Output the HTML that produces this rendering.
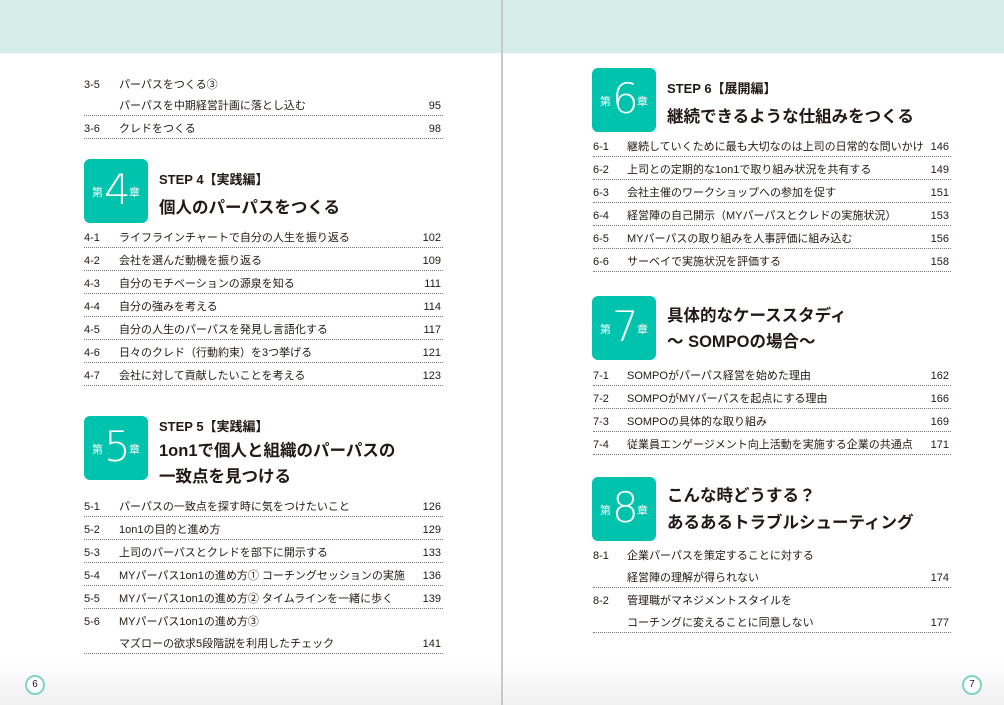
<!DOCTYPE html>
<html><head><meta charset="utf-8"><style>
*{margin:0;padding:0;box-sizing:border-box}
body{width:1004px;height:705px;position:relative;background:#fff;overflow:hidden;font-family:"Liberation Sans","Noto Sans CJK JP",sans-serif;color:#231815}
.hd{position:absolute;top:0;left:0;width:1004px;height:53px;background:#d5eee7}
.div{position:absolute;left:501px;top:0;width:2px;height:705px;background:#c8c8c8}
.r{position:absolute;height:19px;font-size:11px;line-height:18px;white-space:nowrap}
.r.l{border-bottom:1px dotted #777}
.r .n{position:absolute;left:0}
.r .t{position:absolute}
.r .p{position:absolute;right:2px}
.box{position:absolute;width:64px;height:64px;background:#00c3ae;border-radius:6px;color:#fff}
.box .a{position:absolute;left:8px;top:25px;font-size:11px}
.box .b{position:absolute;left:20px;top:6px;font-size:42px;line-height:50px;font-family:"DejaVu Sans","Liberation Sans",sans-serif;font-weight:300}
.box .c{position:absolute;left:45px;top:25px;font-size:11px}
.h1{position:absolute;font-size:13px;font-weight:bold;white-space:nowrap}
.h2{position:absolute;font-size:16.5px;font-weight:bold;white-space:nowrap}
.pg{position:absolute;top:675px;width:20px;height:20px;border:2px solid #7fd3c5;border-radius:50%;font-size:10px;text-align:center;line-height:16px;background:#fff}
.ft{position:absolute;top:660px;left:0;width:1004px;height:45px;background:linear-gradient(#fff,#f0f0f0)}
</style></head><body>
<div class="ft"></div>
<div class="hd"></div>
<div class="div"></div>

<!-- LEFT -->
<div id="L"></div>
<div class="box" style="left:84px;top:159px"><span class="a">第</span><span class="b">4</span><span class="c">章</span></div>
<div class="h1" style="left:159px;top:169px">STEP 4【実践編】</div>
<div class="h2" style="left:159px;top:194px">個人のパーパスをつくる</div>
<div class="box" style="left:84px;top:416px"><span class="a">第</span><span class="b">5</span><span class="c">章</span></div>
<div class="h1" style="left:159px;top:416px">STEP 5【実践編】</div>
<div class="h2" style="left:159px;top:437px">1on1で個人と組織のパーパスの</div>
<div class="h2" style="left:159px;top:463px">一致点を見つける</div>

<div class="box" style="left:592px;top:68px"><span class="a">第</span><span class="b">6</span><span class="c">章</span></div>
<div class="h1" style="left:667px;top:78px">STEP 6【展開編】</div>
<div class="h2" style="left:667px;top:103px">継続できるような仕組みをつくる</div>
<div class="box" style="left:592px;top:296px"><span class="a">第</span><span class="b">7</span><span class="c">章</span></div>
<div class="h2" style="left:667px;top:302px">具体的なケーススタディ</div>
<div class="h2" style="left:667px;top:328px">～ SOMPOの場合～</div>
<div class="box" style="left:592px;top:477px"><span class="a">第</span><span class="b">8</span><span class="c">章</span></div>
<div class="h2" style="left:667px;top:482px">こんな時どうする？</div>
<div class="h2" style="left:667px;top:509px">あるあるトラブルシューティング</div>

<div class="pg" style="left:25px">6</div>
<div class="pg" style="left:962px">7</div>

<!-- rows left: x 84-443, title offset 35 -->
<div class="r" style="left:84px;top:76px;width:359px"><span class="n">3-5</span><span class="t" style="left:35px">パーパスをつくる③</span></div>
<div class="r l" style="left:84px;top:97px;width:359px"><span class="t" style="left:35px">パーパスを中期経営計画に落とし込む</span><span class="p">95</span></div>
<div class="r l" style="left:84px;top:120px;width:359px"><span class="n">3-6</span><span class="t" style="left:35px">クレドをつくる</span><span class="p">98</span></div>
<div class="r l" style="left:84px;top:229px;width:359px"><span class="n">4-1</span><span class="t" style="left:35px">ライフラインチャートで自分の人生を振り返る</span><span class="p">102</span></div>
<div class="r l" style="left:84px;top:252px;width:359px"><span class="n">4-2</span><span class="t" style="left:35px">会社を選んだ動機を振り返る</span><span class="p">109</span></div>
<div class="r l" style="left:84px;top:275px;width:359px"><span class="n">4-3</span><span class="t" style="left:35px">自分のモチベーションの源泉を知る</span><span class="p">111</span></div>
<div class="r l" style="left:84px;top:298px;width:359px"><span class="n">4-4</span><span class="t" style="left:35px">自分の強みを考える</span><span class="p">114</span></div>
<div class="r l" style="left:84px;top:321px;width:359px"><span class="n">4-5</span><span class="t" style="left:35px">自分の人生のパーパスを発見し言語化する</span><span class="p">117</span></div>
<div class="r l" style="left:84px;top:344px;width:359px"><span class="n">4-6</span><span class="t" style="left:35px">日々のクレド（行動約束）を3つ挙げる</span><span class="p">121</span></div>
<div class="r l" style="left:84px;top:367px;width:359px"><span class="n">4-7</span><span class="t" style="left:35px">会社に対して貢献したいことを考える</span><span class="p">123</span></div>
<div class="r l" style="left:84px;top:498px;width:359px"><span class="n">5-1</span><span class="t" style="left:35px">パーパスの一致点を探す時に気をつけたいこと</span><span class="p">126</span></div>
<div class="r l" style="left:84px;top:521px;width:359px"><span class="n">5-2</span><span class="t" style="left:35px">1on1の目的と進め方</span><span class="p">129</span></div>
<div class="r l" style="left:84px;top:544px;width:359px"><span class="n">5-3</span><span class="t" style="left:35px">上司のパーパスとクレドを部下に開示する</span><span class="p">133</span></div>
<div class="r l" style="left:84px;top:567px;width:359px"><span class="n">5-4</span><span class="t" style="left:35px">MYパーパス1on1の進め方① コーチングセッションの実施</span><span class="p">136</span></div>
<div class="r l" style="left:84px;top:590px;width:359px"><span class="n">5-5</span><span class="t" style="left:35px">MYパーパス1on1の進め方② タイムラインを一緒に歩く</span><span class="p">139</span></div>
<div class="r" style="left:84px;top:613px;width:359px"><span class="n">5-6</span><span class="t" style="left:35px">MYパーパス1on1の進め方③</span></div>
<div class="r l" style="left:84px;top:635px;width:359px"><span class="t" style="left:35px">マズローの欲求5段階説を利用したチェック</span><span class="p">141</span></div>

<!-- rows right: x 593-951 -->
<div class="r l" style="left:593px;top:138px;width:358px"><span class="n">6-1</span><span class="t" style="left:34px">継続していくために最も大切なのは上司の日常的な問いかけ</span><span class="p">146</span></div>
<div class="r l" style="left:593px;top:161px;width:358px"><span class="n">6-2</span><span class="t" style="left:34px">上司との定期的な1on1で取り組み状況を共有する</span><span class="p">149</span></div>
<div class="r l" style="left:593px;top:184px;width:358px"><span class="n">6-3</span><span class="t" style="left:34px">会社主催のワークショップへの参加を促す</span><span class="p">151</span></div>
<div class="r l" style="left:593px;top:207px;width:358px"><span class="n">6-4</span><span class="t" style="left:34px">経営陣の自己開示（MYパーパスとクレドの実施状況）</span><span class="p">153</span></div>
<div class="r l" style="left:593px;top:230px;width:358px"><span class="n">6-5</span><span class="t" style="left:34px">MYパーパスの取り組みを人事評価に組み込む</span><span class="p">156</span></div>
<div class="r l" style="left:593px;top:253px;width:358px"><span class="n">6-6</span><span class="t" style="left:34px">サーベイで実施状況を評価する</span><span class="p">158</span></div>
<div class="r l" style="left:593px;top:367px;width:358px"><span class="n">7-1</span><span class="t" style="left:34px">SOMPOがパーパス経営を始めた理由</span><span class="p">162</span></div>
<div class="r l" style="left:593px;top:390px;width:358px"><span class="n">7-2</span><span class="t" style="left:34px">SOMPOがMYパーパスを起点にする理由</span><span class="p">166</span></div>
<div class="r l" style="left:593px;top:413px;width:358px"><span class="n">7-3</span><span class="t" style="left:34px">SOMPOの具体的な取り組み</span><span class="p">169</span></div>
<div class="r l" style="left:593px;top:436px;width:358px"><span class="n">7-4</span><span class="t" style="left:34px">従業員エンゲージメント向上活動を実施する企業の共通点</span><span class="p">171</span></div>
<div class="r" style="left:593px;top:547px;width:358px"><span class="n">8-1</span><span class="t" style="left:34px">企業パーパスを策定することに対する</span></div>
<div class="r l" style="left:593px;top:569px;width:358px"><span class="t" style="left:34px">経営陣の理解が得られない</span><span class="p">174</span></div>
<div class="r" style="left:593px;top:592px;width:358px"><span class="n">8-2</span><span class="t" style="left:34px">管理職がマネジメントスタイルを</span></div>
<div class="r l" style="left:593px;top:614px;width:358px"><span class="t" style="left:34px">コーチングに変えることに同意しない</span><span class="p">177</span></div>
</body></html>
